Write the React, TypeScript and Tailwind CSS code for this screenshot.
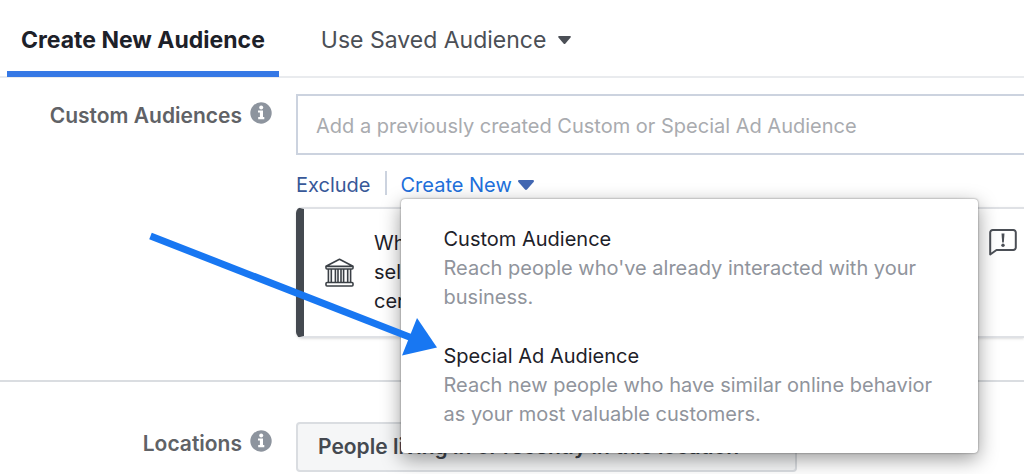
import clsx from 'clsx';
import type { ReactNode } from 'react';

type InfoLabelProps = {
  children: ReactNode;
  className?: string;
  htmlFor: string;
};

type MenuItemProps = {
  description: string;
  title: string;
};

const MENU_ITEMS: MenuItemProps[] = [
  {
    description: "Reach people who've already interacted with your business.",
    title: 'Custom Audience',
  },
  {
    description:
      'Reach new people who have similar online behavior as your most valuable customers.',
    title: 'Special Ad Audience',
  },
];

const Caret = ({ className }: { className?: string }) => (
  <svg aria-hidden="true" className={className} fill="currentColor" viewBox="0 0 16 10">
    <path d="M1.2 0h13.6c1 0 1.5 1.2.8 2L9.2 9.3a1.6 1.6 0 0 1-2.4 0L.4 2C-.3 1.2.2 0 1.2 0Z" />
  </svg>
);

const InfoIcon = () => (
  <svg aria-hidden="true" className="h-[22px] w-[22px] shrink-0" viewBox="0 0 22 22">
    <circle cx="11" cy="11" fill="#8d949e" r="10.7" />
    <circle cx="11.2" cy="5.5" fill="#fff" r="2" />
    <path d="M8 8.5h5v6.600h1.300V17.200H8.200v-2.100h1.700v-4.500H8Z" fill="#fff" />
  </svg>
);

const BankIcon = () => (
  <svg
    aria-hidden="true"
    className="h-[29px] w-[29px] shrink-0"
    fill="none"
    stroke="#3b4046"
    strokeLinejoin="round"
    strokeWidth="1.6"
    viewBox="0 0 29 29"
  >
    <path d="M1 10V8.2L14.5 1.2 28 8.2V10a1 1 0 0 1-1 1H2a1 1 0 0 1-1-1ZM2 8.4h25" />
    <path d="M3.4 11v13.500M6.300 11v13.500M10.400 11v13.500M13 11v13.500M16 11v13.500M18.600 11v13.500M22.700 11v13.500M25.600 11v13.500" />
    <rect height="3.5" rx="1" width="27" x="1" y="24.5" />
  </svg>
);

const FeedbackIcon = () => (
  <svg
    aria-hidden="true"
    className="h-7 w-7"
    fill="none"
    stroke="#4b4f56"
    strokeLinejoin="round"
    strokeWidth="2"
    viewBox="0 0 28 28"
  >
    <path d="M1.2 25.5V3.500a2.500 2.500 0 0 1 2.500-2.500h20.600a2.500 2.500 0 0 1 2.500 2.500v15a2.500 2.500 0 0 1-2.500 2.500H7.500Z" />
    <path d="M12.5 4.500h3l-.7 9h-1.600Z" fill="#4b4f56" stroke="none" />
    <circle cx="14" cy="16.2" fill="#4b4f56" r="1.7" stroke="none" />
  </svg>
);

const InfoLabel = ({ children, className, htmlFor }: InfoLabelProps) => (
  <label
    className={clsx(
      'flex items-start justify-end gap-2 text-[21px] leading-7 font-semibold text-[#606266]',
      className,
    )}
    htmlFor={htmlFor}
  >
    {children}
    <InfoIcon />
  </label>
);

const MenuItem = ({ description, title }: MenuItemProps) => (
  <button className="block w-full text-left text-[20px] leading-[29px]" role="menuitem" type="button">
    <span className="block text-[#1d2129]">{title}</span>
    <span className="block text-[#90949c]">{description}</span>
  </button>
);

const CreateNewMenu = () => (
  <div className="relative">
    <button
      aria-expanded="true"
      aria-haspopup="menu"
      className="flex items-center gap-[6px] text-[20px] leading-7 text-[#216fdb]"
      type="button"
    >
      Create New
      <Caret className="h-[10px] w-4 text-[#4267b2]" />
    </button>
    <div
      className="absolute top-full left-0 z-10 flex w-[577px] flex-col gap-[30px] rounded-sm bg-white pt-[26px] pr-9 pb-6 pl-[43px] shadow-[0_0_2px_rgba(0,0,0,0.5),0_6px_20px_rgba(0,0,0,0.4)]"
      role="menu"
    >
      {MENU_ITEMS.map((item) => (
        <MenuItem key={item.title} {...item} />
      ))}
    </div>
  </div>
);

const PointerArrow = () => (
  <svg
    aria-hidden="true"
    className="pointer-events-none absolute top-[230px] left-[148px] z-20 h-[130px] w-[292px]"
    viewBox="148 230 292 130"
  >
    <path d="M150.500 236 412 338" stroke="#1877f2" strokeWidth="7" />
    <path d="M417 318 437 347.5 402 355.5Z" fill="#1877f2" />
  </svg>
);

const App = () => (
  <main className="relative overflow-hidden bg-white font-[Inter,'Liberation_Sans',sans-serif]">
    <div
      className="flex h-[78px] border-b-2 border-[#e9ebee] pl-[7px] text-[23px] leading-8"
      role="tablist"
    >
      <button
        aria-selected="true"
        className="h-[77px] shrink-0 border-b-[6px] border-[#3578e5] px-[14px] pt-2 font-bold text-[#1d2129]"
        role="tab"
        type="button"
      >
        Create New Audience
      </button>
      <button
        aria-selected="false"
        className="ml-7 flex h-[77px] shrink-0 items-center gap-3 border-b-[6px] border-transparent px-[14px] pt-2 text-[#4b4f56]"
        role="tab"
        type="button"
      >
        Use Saved Audience
        <Caret className="h-2 w-[13px]" />
      </button>
    </div>

    <section className="grid grid-cols-[272px_1fr] gap-x-6 border-b-2 border-[#dadde1] pt-4 pb-[42px]">
      <InfoLabel className="pt-2" htmlFor="custom-audiences">
        Custom Audiences
      </InfoLabel>
      <div className="min-w-0">
        <input
          className="block h-[61px] w-full border-2 border-r-0 border-[#ccd3df] px-[18px] pt-[2px] text-[20px] placeholder:text-[#a9abaf]"
          id="custom-audiences"
          placeholder="Add a previously created Custom or Special Ad Audience"
          type="text"
        />
        <div className="mt-4 flex items-start gap-[14px]">
          <button className="text-[20px] leading-7 text-[#385898]" type="button">
            Exclude
          </button>
          <span className="h-6 w-[2px] bg-[#ccd3df]" />
          <CreateNewMenu />
        </div>
        <div className="mt-2 flex items-center rounded-l-md border-y-2 border-l-8 border-y-[#dfe1e5] border-l-[#444950] py-5 pr-[7px] pl-[21px] shadow-sm">
          <BankIcon />
          <p className="ml-5 flex-1 text-[20px] leading-[29px] text-[#1d2129]">
            When an ad is in a special category,
            <br />
            select from the audience options and
            <br />
            certify that they apply.
          </p>
          <button aria-label="Give feedback" className="self-start" type="button">
            <FeedbackIcon />
          </button>
        </div>
      </div>
    </section>

    <section className="grid grid-cols-[272px_1fr] gap-x-6 pt-10 pb-[2px]">
      <InfoLabel className="pt-2" htmlFor="locations">
        Locations
      </InfoLabel>
      <button
        className="h-[50px] w-[501px] rounded-sm border-2 border-[#dadde1] bg-[#f5f6f7] px-5 text-left text-[21px] font-semibold text-[#444950]"
        id="locations"
        type="button"
      >
        People living in or recently in this location
      </button>
    </section>

    <PointerArrow />
  </main>
);

export default App;
